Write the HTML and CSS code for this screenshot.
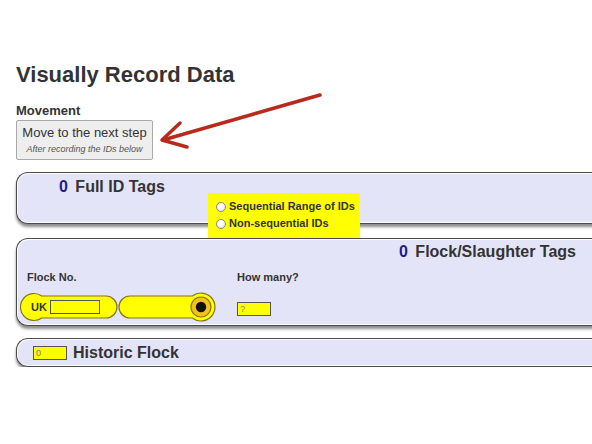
FILE: index.html
```html
<!DOCTYPE html>
<html lang="en">

<head>
    <meta charset="UTF-8">
    <meta name="viewport" content="width=device-width, initial-scale=1.0">
    <title>Visually Record Data</title>
    <link rel="stylesheet" href="styles.css">
</head>

<body>
    <h1 class="title">Visually Record Data</h1>

    <div class="label">Movement</div>
    <button class="next-btn" type="button">
        <span class="next-main">Move to the next step</span>
        <span class="next-sub">After recording the IDs below</span>
    </button>

    <!-- annotation arrow pointing at the button -->
    <svg class="arrow" width="592" height="170" viewBox="0 0 592 170">
        <g fill="none" stroke="#b82a1c" stroke-width="3.5" stroke-linecap="round" stroke-linejoin="round">
            <path d="M320 95 L163 140" />
            <path d="M180 123 L162 140 L187 147" />
        </g>
    </svg>

    <section class="panel panel-full">
        <div class="panel-title"><span class="count">0</span> Full ID Tags</div>
        <div class="mode-box">
            <label class="mode"><input type="radio" name="mode" class="radio"> Sequential Range of IDs</label>
            <label class="mode"><input type="radio" name="mode" class="radio"> Non-sequential IDs</label>
        </div>
    </section>

    <section class="panel panel-flock">
        <div class="panel-title right"><span class="count">0</span> Flock/Slaughter Tags</div>
        <div class="flock-grid">
            <div class="small-label">Flock No.</div>
            <div class="small-label">How many?</div>
            <div class="tag">
                <svg class="tag-shape" width="196" height="30" viewBox="0 0 196 30">
                    <g fill="#ffff00" stroke="#857415" stroke-width="1.2">
                        <path d="M21.8 4 L86 4 A11 11 0 0 1 86 26 L21.8 26 A13.5 13.5 0 1 1 21.8 4 Z" />
                        <path d="M110 4 L172.3 4 A14 14 0 1 1 172.3 26 L110 26 A11 11 0 0 1 110 4 Z" />
                        <circle cx="181" cy="15" r="10" fill="#f2c21e" />
                    </g>
                    <circle cx="181" cy="15" r="5.2" fill="#111" />
                </svg>
                <span class="uk">UK</span>
                <input type="text" class="field flock-no">
            </div>
            <div><input type="text" class="field" placeholder="?"></div>
        </div>
    </section>

    <section class="panel panel-history">
        <input type="text" class="field" value="0">
        <div class="panel-title">Historic Flock</div>
    </section>
</body>

</html>
```

FILE: styles.css
```css
html, body {
    overflow-x: hidden;
}
body {
    margin: 0;
    padding: 0 0 0 16px;
    background: #ffffff;
    font-family: "Liberation Sans", Arial, sans-serif;
    color: #333333;
    position: relative;
}
.title {
    margin: 62px 0 15px;
    font-size: 22px;
    line-height: 26px;
    font-weight: bold;
    color: #333333;
}
.label {
    font-size: 13px;
    line-height: 16px;
    font-weight: bold;
}
.next-btn {
    margin-top: 1px;
    width: 137px;
    height: 40px;
    padding: 4px 0;
    display: flex;
    flex-direction: column;
    align-items: center;
    gap: 3px;
    background: #eeeeee;
    border: 1px solid #a9a9a9;
    border-radius: 2px;
    font-family: inherit;
    color: #333333;
}
.next-main {
    font-size: 13px;
    line-height: 16px;
}
.next-sub {
    font-size: 9px;
    line-height: 11px;
    font-style: italic;
    color: #555555;
}
.arrow {
    position: absolute;
    left: 0;
    top: 0;
    pointer-events: none;
}
.panel {
    position: relative;
    margin-right: -10px;
    background: #e4e4f8;
    border: 1px solid #4a4a4a;
    border-right: none;
    border-radius: 12px 0 0 12px;
    box-shadow: inset 1px 1px 0 #ffffff, inset 0 -1px 0 #ffffff, 0 3px 3px rgba(0, 0, 0, 0.45);
}
.panel-title {
    font-size: 16px;
    line-height: 19px;
    font-weight: bold;
    color: #333333;
}
.panel-title.right {
    text-align: right;
    padding-right: 26px;
}
.count {
    color: #1c1c8e;
    margin-right: 3px;
}
.panel-full {
    margin-top: 12px;
    padding: 4px 0 0 42px;
    height: 46px;
}
.mode-box {
    position: absolute;
    left: 191px;
    top: 20px;
    width: 138px;
    height: 36px;
    padding: 5px 6px 4px 8px;
    background: #ffff00;
    display: flex;
    flex-direction: column;
    white-space: nowrap;
}
.mode {
    display: flex;
    align-items: center;
    gap: 3px;
    font-size: 11px;
    line-height: 17px;
    font-weight: bold;
    color: #333333;
}
.radio {
    appearance: none;
    flex: none;
    margin: 0;
    width: 10px;
    height: 10px;
    border: 1px solid #8a8a8a;
    border-radius: 50%;
    background: radial-gradient(circle at 40% 35%, #ffffff 30%, #d6d6d6 100%);
}
.panel-flock {
    margin-top: 14px;
    padding: 3px 0 3px 10px;
}
.flock-grid {
    display: grid;
    grid-template-columns: 210px auto;
    row-gap: 8px;
    align-items: center;
    margin-top: 10px;
}
.small-label {
    font-size: 11px;
    line-height: 13px;
    font-weight: bold;
}
.tag {
    position: relative;
    width: 196px;
    height: 30px;
    margin-left: -7px;
    display: flex;
    align-items: center;
    gap: 3px;
    padding-left: 11px;
    box-sizing: border-box;
}
.tag-shape {
    position: absolute;
    left: 0;
    top: 0;
}
.uk {
    position: relative;
    font-size: 11px;
    font-weight: bold;
    color: #333333;
}
.field {
    position: relative;
    width: 34px;
    height: 14px;
    box-sizing: border-box;
    margin: 0;
    padding: 0 2px;
    background: #ffff00;
    border: 1px solid #555555;
    border-radius: 0;
    font-family: inherit;
    font-size: 9px;
    color: #777777;
}
.field::placeholder {
    color: #888888;
}
.flock-no {
    width: 50px;
}
.panel-history {
    margin-top: 12px;
    height: 27px;
    padding: 0 0 0 16px;
    display: flex;
    align-items: center;
    gap: 6px;
}
```
